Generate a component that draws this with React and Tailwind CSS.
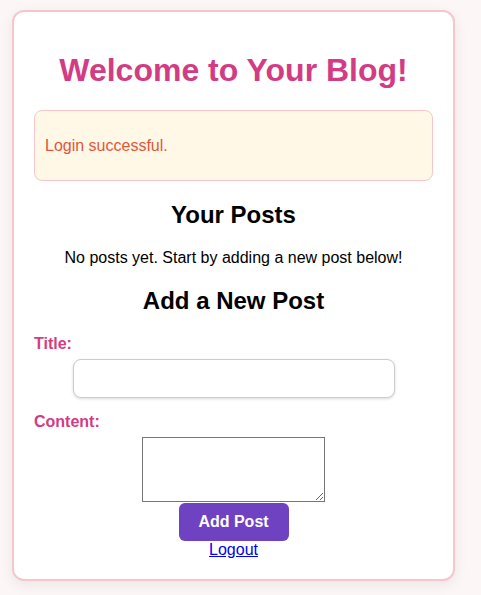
export default function App() {
  return (
    <div
      className="min-h-screen bg-[#fdf6f6] pt-[10px] pl-[12px] pb-4"
      style={{ fontFamily: '"Liberation Sans", Arial, sans-serif' }}
    >
      <div className="w-[443px] rounded-[12px] border-2 border-[#f5c6cb] bg-white p-5 shadow-[0_4px_14px_rgba(0,0,0,0.07)]">
        {/* HEADER */}
        <h1 className="mt-5 mb-[21px] text-center text-[32px] font-bold leading-[37px] text-[#d23c85]">
          Welcome to Your Blog!
        </h1>

        {/* ALERT */}
        <div className="flex h-[71px] items-center rounded-lg border border-[#f5c6cb] bg-[#fff8e6] px-[10px]">
          <p className="text-base leading-[18px] text-[#e2563c]">Login successful.</p>
        </div>

        {/* POSTS */}
        <h2 className="mt-5 mb-5 text-center text-2xl font-bold leading-[28px] text-black">
          Your Posts
        </h2>
        <p className="text-center text-base leading-[18px] text-black">
          No posts yet. Start by adding a new post below!
        </p>

        {/* FORM */}
        <h2 className="mt-5 mb-5 text-center text-2xl font-bold leading-[28px] text-black">
          Add a New Post
        </h2>
        <form onSubmit={(e) => e.preventDefault()}>
          <label className="block text-base font-bold leading-[18px] text-[#d23c85]">Title:</label>
          <input
            type="text"
            className="mx-auto mt-[6px] block h-[39px] w-[322px] rounded-lg border border-[#cccccc] bg-white px-2 shadow-[0_1px_3px_rgba(0,0,0,0.15)] outline-none"
          />
          <label className="mt-[15px] block text-base font-bold leading-[18px] text-[#d23c85]">
            Content:
          </label>
          <textarea className="mx-auto mt-[6px] block h-[65px] w-[183px] border border-[#767676] bg-white outline-none" />
          <button
            type="submit"
            className="mx-auto mt-px block h-[38px] w-[110px] rounded-md bg-[#6f42c1] text-base font-bold text-white"
          >
            Add Post
          </button>
        </form>
        <div className="text-center text-[16px] leading-[18px]">
          <a href="#" className="text-[#0000ee] underline">
            Logout
          </a>
        </div>
      </div>
    </div>
  );
}
